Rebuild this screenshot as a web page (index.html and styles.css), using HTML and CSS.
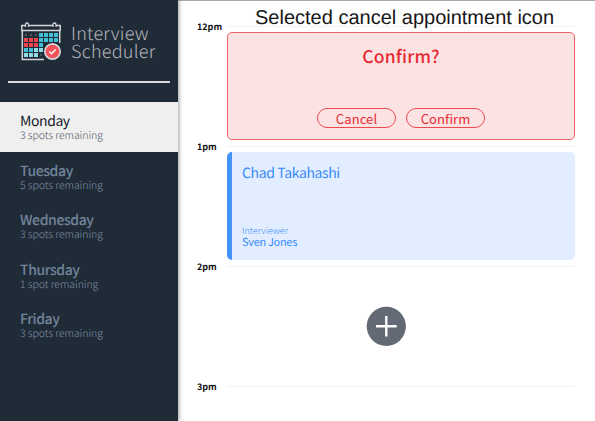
FILE: index.html
```html
<!DOCTYPE html>
<html lang="en">
<head>
<meta charset="utf-8">
<title>Interview Scheduler</title>
<link rel="stylesheet" href="styles.css">
</head>
<body>
<div class="layout">
  <aside class="sidebar">
    <div class="brand">
      <svg class="brand-icon" width="42" height="40" viewBox="0 0 42 40">
        <path d="M1.800 3.500h38.400v5H1.800zM2.300 8v29.500H24M39.700 8v13" fill="none" stroke="#d3d4d8" stroke-width="1.500"/>
        <path d="M5.500 5V2.500a1.500 1.500 0 0 1 3 0V5M33 5V2.500a1.500 1.500 0 0 1 3 0V5" fill="#202b38" stroke="#d3d4d8" stroke-width="1.300"/>
        <path d="M5.500 13h1M10.500 13h1M15.500 13h1M20.500 33h1" stroke="#d3d4d8" stroke-width="1.200"/>
        <path d="M19 11h4v4h-4zM24 11h4v4h-4zM29 11h4v4h-4zM34 11h4v4h-4zM19 16h4v4h-4zM24 16h4v4h-4zM29 16h4v4h-4zM34 16h4v4h-4zM19 21h4v4h-4zM4 26h4v4H4zM9 26h4v4H9z" fill="#42bed6"/>
        <path d="M14 26h4v4h-4zM19 26h4v4h-4zM4 31h4v4H4zM9 31h4v4H9zM14 31h4v4h-4z" fill="#92dce7"/>
        <path d="M4 16h4v4H4zM9 16h4v4H9zM14 16h4v4h-4zM4 21h4v4H4zM9 21h4v4H9zM14 21h4v4h-4z" fill="#f0444d"/>
        <circle cx="32.500" cy="29.500" r="9.500" fill="#202b38"/>
        <circle cx="32.500" cy="29.500" r="7.700" fill="#f5525a" stroke="#d3d4d8" stroke-width="1.700"/>
        <path d="M29.300 29.500l2.300 2.200 4-4.200" fill="none" stroke="#fff" stroke-width="1.500"/>
      </svg>
      <div class="brand-name">Interview<br>Scheduler</div>
    </div>
    <hr class="divider">
    <ul class="days">
      <li class="day selected"><h2>Monday</h2><p>3 spots remaining</p></li>
      <li class="day"><h2>Tuesday</h2><p>5 spots remaining</p></li>
      <li class="day"><h2>Wednesday</h2><p>3 spots remaining</p></li>
      <li class="day"><h2>Thursday</h2><p>1 spot remaining</p></li>
      <li class="day"><h2>Friday</h2><p>3 spots remaining</p></li>
    </ul>
  </aside>
  <main class="schedule">
    <h1 class="caption">Selected cancel appointment icon</h1>
    <section class="slot">
      <header class="time"><span>12pm</span></header>
      <div class="card confirm">
        <h3>Confirm?</h3>
        <div class="actions"><button>Cancel</button><button>Confirm</button></div>
      </div>
    </section>
    <section class="slot">
      <header class="time"><span>1pm</span></header>
      <div class="card show">
        <h3>Chad Takahashi</h3>
        <div><h4>Interviewer</h4><p>Sven Jones</p></div>
      </div>
    </section>
    <section class="slot">
      <header class="time"><span>2pm</span></header>
      <div class="card empty">
        <svg width="40" height="40" viewBox="0 0 40 40"><circle cx="20.300" cy="20.300" r="19.600" fill="#636a75"/><path d="M20.300 10v20.600M10 20.300h20.600" stroke="#fff" stroke-width="2.400"/></svg>
      </div>
    </section>
    <section class="slot last">
      <header class="time"><span>3pm</span></header>
    </section>
  </main>
</div>
</body>
</html>
```

FILE: styles.css
```css
* { box-sizing: border-box; margin: 0; padding: 0; }
body {
  font-family: "Noto Sans CJK SC", "Noto Sans", sans-serif;
  background: #fff;
  overflow: hidden;
  text-rendering: geometricPrecision;
}
.layout { display: flex; width: 595px; height: 421px; }
.sidebar {
  width: 178px;
  flex: none;
  background: #202b38;
  box-shadow: 1px 0 4px rgba(0, 0, 0, .4);
  z-index: 1;
}
.brand { display: flex; gap: 9px; padding: 22px 0 0 20px; height: 81px; }
.brand-icon { flex: none; }
.brand-name {
  font-weight: 300;
  font-size: 18px;
  letter-spacing: .25px;
  line-height: 18px;
  color: #b4b5ba;
  padding-top: 2px;
}
.divider { border: 0; height: 2px; margin: 0 8px; background: #dedcdd; }
.days { list-style: none; padding-top: 19px; }
.day { height: 49.500px; padding: 10px 20px 0; color: #7d90a6; }
.day h2 { font-weight: 400; font-size: 14px; letter-spacing: -.42px; line-height: 18px; }
.day:not(.selected) h2 { font-weight: 500; letter-spacing: -.4px; color: #71849a; }
.day p { font-weight: 300; font-size: 10.500px; letter-spacing: -.06px; line-height: 12px; }
.selected { background: #efefef; color: #151b29; }
.selected p { color: #55585f; }
.schedule {
  position: relative;
  flex: 1;
  border-top: 1px solid #aaa;
  padding: 20px 20px 0 19px;
}
.caption {
  position: absolute;
  left: 77px;
  top: 5px;
  font: 400 20px/24px "Liberation Sans", sans-serif;
  color: #161616;
  white-space: nowrap;
}
.slot { height: 120px; }
.last { height: auto; }
.time {
  display: flex;
  align-items: center;
  height: 11px;
  font-size: 9px;
  line-height: 12px;
  font-weight: 700;
  color: #111;
}
.time span { width: 30px; }
.time::after { content: ""; flex: 1; height: 1px; margin-bottom: 1px; background: #f2f2f2; }
.card { height: 108px; margin-left: 30px; border-radius: 5px; }
.confirm {
  border: 1px solid #ef6265;
  background: #fbe3e4;
  color: #e82a32;
  display: flex;
  flex-direction: column;
  align-items: center;
  justify-content: space-between;
  padding: 14px 0 11px;
}
.confirm h3 { font-size: 17.500px; letter-spacing: .15px; line-height: 20px; font-weight: 500; }
.actions { display: flex; gap: 10px; }
.actions button {
  width: 79px;
  height: 20px;
  border: 1px solid #e94a50;
  border-radius: 10px;
  background: none;
  color: inherit;
  font: 400 13px/17px "Noto Sans CJK SC", sans-serif;
  letter-spacing: .1px;
}
.show {
  border-left: 5px solid #4592fa;
  background: #e2eeff;
  color: #378af8;
  display: flex;
  flex-direction: column;
  justify-content: space-between;
  padding: 11px 10px 11px;
}
.show h3 { font-size: 14px; letter-spacing: -.37px; line-height: 20px; font-weight: 400; }
.show h4 { font-size: 9px; line-height: 11px; font-weight: 300; }
.show p { font-size: 11px; letter-spacing: -.3px; line-height: 13px; }
.empty { display: flex; justify-content: center; align-items: flex-start; padding: 34px 30px 0 0; }
```
